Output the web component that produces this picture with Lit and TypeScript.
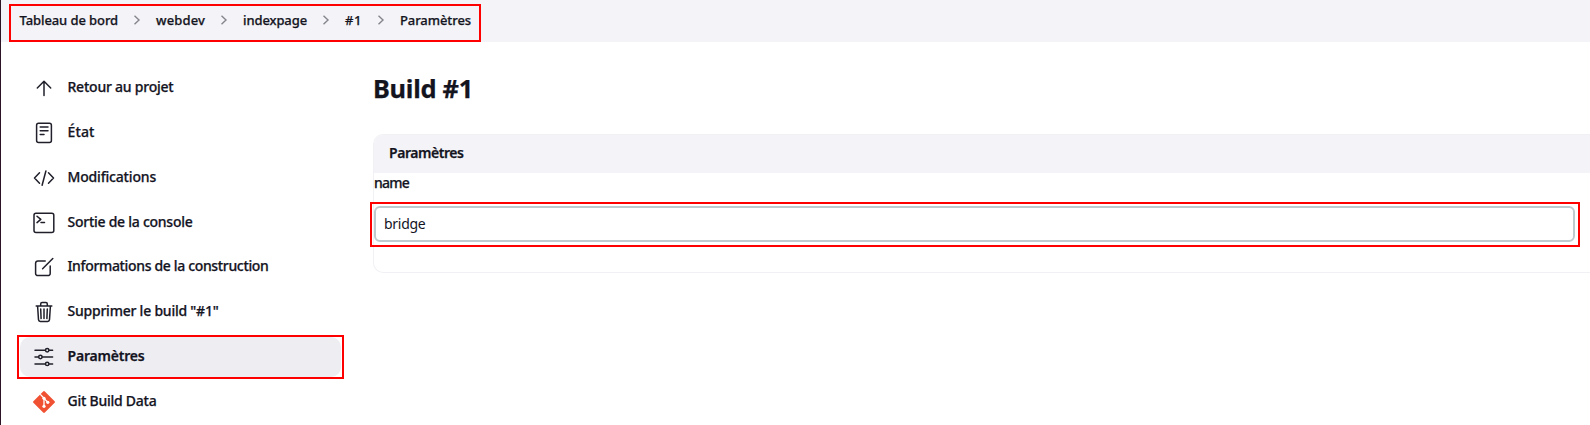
import { LitElement, html, css, svg } from "lit";
import { customElement, property } from "lit/decorators.js";
import { classMap } from "lit/directives/class-map.js";

/** A text run whose tracking is adjusted so that it fills a given width. */
@customElement("tracked-text")
class TrackedText extends LitElement {
  @property() text = "";
  @property({ type: Number }) width = 0;

  static styles = css`
    :host { display: inline-block; white-space: pre; }
    .run { display: inline-block; }
  `;

  firstUpdated() {
    const run = this.renderRoot.querySelector(".run") as HTMLElement;
    const natural = run.getBoundingClientRect().width;
    run.style.letterSpacing = `${(this.width - natural) / this.text.length}px`;
  }

  render() {
    return html`<span class="run">${this.text}</span>`;
  }
}

const icons = {
  up: svg`<path d="M11 18.5V4.6M4.3 11 11 4.3 17.7 11"/>`,
  document: svg`<rect x="3.6" y="1.2" width="14.8" height="19.2" rx="2"/><path d="M7.2 5h7.8M7.2 8.8h7.8M7.2 12.5h3.8"/>`,
  code: svg`<path d="M6.5 5.8 1.5 11l5 5.2M15.5 5.8l5 5.2-5 5.2M12.9 4 9.1 18.3"/>`,
  terminal: svg`<rect x="1" y="1.2" width="19.8" height="19.2" rx="2"/><path d="m4 4.2 3.8 3.2L4 10.6M8 10.4h3.5"/>`,
  edit: svg`<path d="M12.2 5H4.8A2.2 2.2 0 0 0 2.6 7.2v10.2a2.2 2.2 0 0 0 2.2 2.2h10.2a2.2 2.2 0 0 0 2.2-2.2V10M9.6 12.7 19.8 2.5"/>`,
  trash: svg`<path d="M4.6 5.2 5.5 18.6c.1 1.1.8 1.8 1.8 1.8h7.4c1 0 1.7-.7 1.8-1.8L17.4 5.2M3.2 4.9h15.6M7.7 4.5V2.9c0-.8.6-1.4 1.4-1.4h3.8c.8 0 1.4.6 1.4 1.4v1.6M11 8v9.6M7.7 8l.4 9.6M14.3 8l-.4 9.6"/>`,
  sliders: svg`<path d="M2 4.3h10.3M16.3 4.3h3.3M2 11h3.4M9.3 11h10.3M2 17.9h10.3M16.3 17.9h3.3"/><circle cx="14.2" cy="4.3" r="1.7"/><circle cx="7.4" cy="11" r="1.7"/><circle cx="14.2" cy="17.9" r="1.7"/>`,
  git: svg`<rect class="gitbg" x="2.9" y="2.9" width="16.2" height="16.2" rx="1.2" transform="rotate(45 11 11)"/><path class="gitline" d="M7.6 3.600 11 7.200v8M11 7.400l3.800 3.800"/><circle class="gitdot" cx="11" cy="7.300" r="1.600"/><circle class="gitdot" cx="11" cy="15.300" r="1.600"/><circle class="gitdot" cx="14.800" cy="11.300" r="1.600"/>`,
};

type IconName = keyof typeof icons;

const crumbs = [
  { text: "Tableau de bord", width: 98.5 },
  { text: "webdev", width: 49 },
  { text: "indexpage", width: 64 },
  { text: "#1", width: 17 },
  { text: "Paramètres", width: 71 },
];

const tasks: { text: string; width: number; icon: IconName; active?: boolean }[] = [
  { text: "Retour au projet", width: 106, icon: "up" },
  { text: "État", width: 27, icon: "document" },
  { text: "Modifications", width: 88.5, icon: "code" },
  { text: "Sortie de la console", width: 125, icon: "terminal" },
  { text: "Informations de la construction", width: 201, icon: "edit" },
  { text: 'Supprimer le build "#1"', width: 151, icon: "trash" },
  { text: "Paramètres", width: 77, icon: "sliders", active: true },
  { text: "Git Build Data", width: 89, icon: "git" },
];

@customElement("app-root")
class AppRoot extends LitElement {
  static styles = css`
    :host {
      display: block;
      box-sizing: border-box;
      height: 425px;
      overflow: hidden;
      border-left: 1px solid #2c1425;
      background: #fff;
      color: #14141f;
      font-family: "Noto Sans", "Open Sans", sans-serif;
      font-size: 14px;
      font-weight: 500;
      -webkit-text-stroke: 0.25px #14141f;
    }
    * { box-sizing: border-box; }
    .topbar { height: 42px; padding: 4px 0 0 8px; background: #f4f4f8; }
    .crumbs {
      display: flex;
      width: 472px;
      height: 38px;
      padding: 0 0 6px 8.5px;
      align-items: center;
      border: 2px solid #f00;
      font-size: 13px;
    }
    .crumbs tracked-text { padding-bottom: 1px; }
    .sep { width: 38px; height: 12px; flex: none; fill: none; stroke: #85858d; stroke-width: 1.4; }
    .layout { display: grid; grid-template-columns: 353px 1fr; }
    .tasks { padding: 23.6px 0 0 16px; }
    .task {
      display: flex;
      width: 327px;
      height: 44.86px;
      padding-left: 3px;
      align-items: center;
    }
    .inner {
      display: flex;
      width: 321px;
      height: 40px;
      padding-left: 13px;
      align-items: center;
      gap: 12.5px;
      border-radius: 10px;
    }
    .inner tracked-text { padding-bottom: 3px; }
    .active { height: 44px; margin-bottom: 0.86px; padding-left: 1px; border: 2px solid #f00; }
    .active .inner { background: #eeedf2; font-weight: 600; }
    .icon {
      width: 22px;
      height: 22px;
      flex: none;
      fill: none;
      stroke: #20202b;
      stroke-width: 1.5;
      stroke-linecap: round;
      stroke-linejoin: round;
      overflow: visible;
    }
    .gitbg { fill: #f05133; stroke: none; }
    .gitline { stroke: #fff; stroke-width: 1.3; }
    .gitdot { fill: #fff; stroke: none; }
    .content { padding: 28px 0 0 19px; }
    h1 { margin: 0; height: 64px; font-size: 25.4px; line-height: 36px; font-weight: 700; }
    .card {
      height: 139px;
      border: 1px solid #f1f1f5;
      border-right: 0;
      border-radius: 10px 0 0 10px;
    }
    .card-head {
      height: 38px;
      padding-left: 15px;
      line-height: 35px;
      background: #f4f4f8;
      border-radius: 9px 0 0 0;
      font-weight: 600;
    }
    .name { height: 29px; line-height: 19px; }
    .frame { width: 1210px; height: 45px; margin-left: -4px; padding: 2px; border: 2px solid #f00; }
    .field {
      height: 36px;
      width: 1201px;
      padding-left: 8px;
      line-height: 32px;
      border: 2px solid #bfcace;
      border-radius: 6px;
      font-weight: 400;
      -webkit-text-stroke: 0;
    }
  `;

  render() {
    return html`
      <header class="topbar">
        <nav class="crumbs">
          ${crumbs.map((c, i) => html`
            ${i ? html`<svg class="sep" viewBox="0 0 38 12"><path d="m16.500 1.800 4.500 4.200-4.500 4.200"/></svg>` : ""}
            <tracked-text .text=${c.text} .width=${c.width}></tracked-text>`)}
        </nav>
      </header>
      <div class="layout">
        <nav class="tasks">
          ${tasks.map((t) => html`
            <div class=${classMap({ task: true, active: !!t.active })}>
              <div class="inner">
                <svg class="icon" viewBox="0 0 22 22">${icons[t.icon]}</svg>
                <tracked-text .text=${t.text} .width=${t.width}></tracked-text>
              </div>
            </div>`)}
        </nav>
        <main class="content">
          <h1><tracked-text .text=${"Build #1"} .width=${100}></tracked-text></h1>
          <section class="card">
            <div class="card-head"><tracked-text .text=${"Paramètres"} .width=${74.5}></tracked-text></div>
            <div class="name"><tracked-text .text=${"name"} .width=${35}></tracked-text></div>
            <div class="frame">
              <div class="field"><tracked-text .text=${"bridge"} .width=${41.5}></tracked-text></div>
            </div>
          </section>
        </main>
      </div>
    `;
  }
}
